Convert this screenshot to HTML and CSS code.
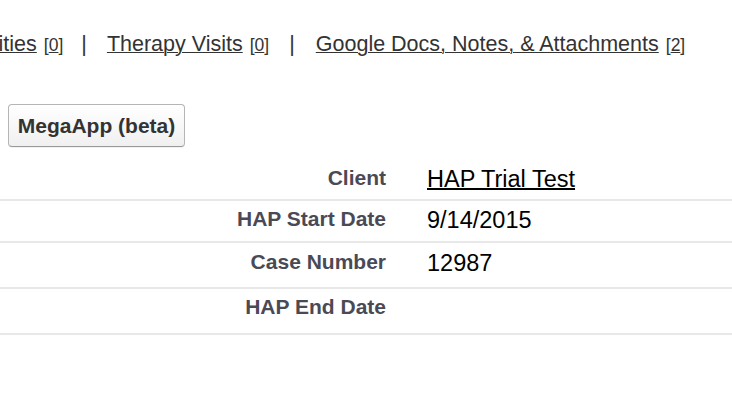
FILE: index.html
```html
<!DOCTYPE html>
<html lang="en">
<head>
<meta charset="utf-8">
<title>HAP Detail</title>
<link rel="stylesheet" href="styles.css">
</head>
<body>
<div class="page">
  <nav class="related">
    <span class="rel-item"><a href="#" class="rel-link">Activities</a> <span class="count">[<a href="#">0</a>]</span></span>
    <span class="sep">|</span>
    <span class="rel-item"><a href="#" class="rel-link">Therapy Visits</a> <span class="count">[<a href="#">0</a>]</span></span>
    <span class="sep sep-wide">|</span>
    <span class="rel-item"><a href="#" class="rel-link">Google Docs, Notes, &amp; Attachments</a> <span class="count">[<a href="#">2</a>]</span></span>
  </nav>
  <div class="buttons">
    <button class="btn" type="button">MegaApp (beta)</button>
  </div>
  <div class="detail">
    <div class="row r1">
      <div class="label">Client</div>
      <div class="value"><a href="#" class="value-link">HAP Trial Test</a></div>
    </div>
    <div class="row r2">
      <div class="label">HAP Start Date</div>
      <div class="value">9/14/2015</div>
    </div>
    <div class="row r3">
      <div class="label">Case Number</div>
      <div class="value">12987</div>
    </div>
    <div class="row r4">
      <div class="label">HAP End Date</div>
      <div class="value"></div>
    </div>
  </div>
</div>
</body>
</html>
```
FILE: styles.css
```css
html, body {
  margin: 0;
  padding: 0;
  background: #ffffff;
  overflow: hidden;
}
body {
  font-family: "Liberation Sans", Arial, Helvetica, sans-serif;
  color: #000;
}
.page {
  width: 732px;
}
.related {
  display: flex;
  align-items: baseline;
  white-space: nowrap;
  padding-top: 32px;
  margin-left: -48px;
  font-size: 21.5px;
  line-height: 24px;
  color: #333;
}
.related a {
  color: #333;
  text-decoration: underline;
  text-decoration-thickness: 1px;
}
.count {
  font-size: 17.5px;
  margin-left: 1px;
}
.sep {
  margin: 0 20px 0 18px;
}
.sep-wide {
  margin: 0 21px 0 20px;
}
.buttons {
  padding: 47px 0 0 8px;
}
.btn {
  font-family: "Liberation Sans", Arial, Helvetica, sans-serif;
  font-weight: bold;
  font-size: 21px;
  line-height: 24px;
  color: #333;
  width: 177px;
  height: 43px;
  padding: 0;
  border: 1px solid #b5b5b5;
  border-bottom-color: #999;
  border-radius: 4px;
  background: linear-gradient(#ffffff, #f0f0f0);
  box-shadow: 0 1px 0 rgba(0,0,0,0.05);
}
.detail {
  margin-top: 13px;
}
.row {
  display: grid;
  grid-template-columns: 386px 1fr;
  column-gap: 41px;
  align-items: start;
  border-bottom: 2px solid #e8e8e8;
}
.r1 { padding: 6px 0 6px; }
.r2 { padding: 6px 0 7px; }
.r3 { padding: 7px 0 10px; }
.r4 { padding: 6px 0 11px; }
.label {
  text-align: right;
  font-weight: bold;
  font-size: 21px;
  line-height: 24px;
  color: #4a4a56;
}
.value {
  font-size: 23.5px;
  line-height: 27px;
  min-height: 27px;
  color: #000;
}
.value-link {
  color: #000;
  text-decoration: underline;
  text-decoration-thickness: 2px;
}
```
